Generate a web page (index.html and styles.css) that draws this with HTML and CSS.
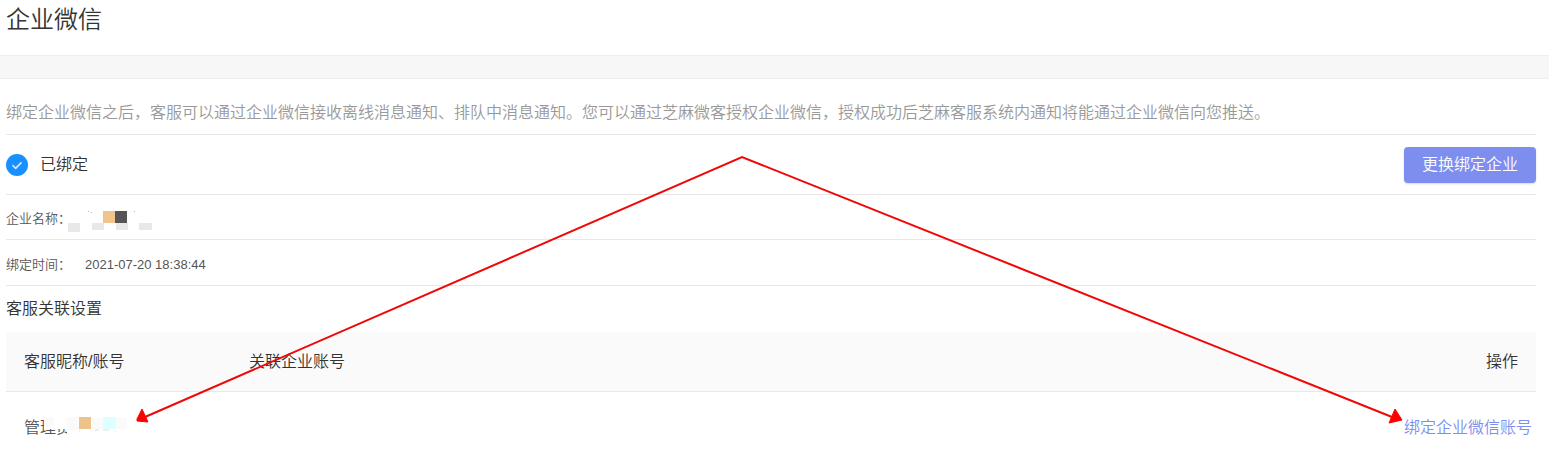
FILE: index.html
```html
<!DOCTYPE html>
<html lang="zh-CN">
<head>
    <meta charset="UTF-8">
    <meta name="viewport" content="width=device-width, initial-scale=1.0">
    <title>企业微信</title>
    <link rel="stylesheet" href="styles.css">
</head>
<body>
    <header class="header">
        <h1>企业微信</h1>
    </header>
    <div class="band"></div>
    <main class="content">
        <p class="intro">绑定企业微信之后，客服可以通过企业微信接收离线消息通知、排队中消息通知。您可以通过芝麻微客授权企业微信，授权成功后芝麻客服系统内通知将能通过企业微信向您推送。</p>
        <div class="status">
            <svg class="check" viewBox="0 0 22 22">
                <circle cx="11" cy="11" r="11" fill="#1890ff"/>
                <path d="M6.5 11.2l3.2 3.1 5.8-6" fill="none" stroke="#cfe8ff" stroke-width="1.7"/>
            </svg>
            <span>已绑定</span>
            <button type="button" class="btn">更换绑定企业</button>
        </div>
        <div class="info">
            <span class="label">企业名称：</span>
            <svg class="mosaic" viewBox="0 0 86 24">
                <path d="M2 14h12v9H2zM26 14h12v7H26zM50 14h12v7H50zM73 14h13v7H73z" fill="#e8e8e8"/>
                <path d="M37 2h12v12H37z" fill="#f0c48c"/>
                <path d="M49 2h12v12H49z" fill="#555"/>
                <path d="M22 2h1v1h-1zM25 3h1v1h-1zM68 2h1v1h-1z" fill="#bbb"/>
            </svg>
        </div>
        <div class="info info-time">
            <span class="label">绑定时间：</span>
            <span class="time">2021-07-20 18:38:44</span>
        </div>
        <h2>客服关联设置</h2>
        <table>
            <thead>
                <tr>
                    <th class="col-name">客服昵称/账号</th>
                    <th>关联企业账号</th>
                    <th class="col-action">操作</th>
                </tr>
            </thead>
            <tbody>
                <tr>
                    <td>
                        <div class="user">管理员
                            <svg class="user-mosaic" viewBox="0 0 106 20">
                                <path d="M20 0h24v12H20zM43 0h12v20H43z" fill="#fff"/>
                                <path d="M20 0h10v9H20zM43 0h11v13H43zM68 1h11v11H68zM92 1h11v11H92z" fill="#fafafa"/>
                                <path d="M55 0h12v12H55z" fill="#edc38c"/>
                                <path d="M79 0h13v12H79z" fill="#dff"/>
                                <path d="M55 14h1M67 14h1M71 13h4M79 13h6M91 14h1" stroke="#ddd"/>
                            </svg>
                        </div>
                    </td>
                    <td></td>
                    <td class="col-link"><a href="#">绑定企业微信账号</a></td>
                </tr>
            </tbody>
        </table>
    </main>
    <svg class="arrows" viewBox="0 0 1549 462">
        <path d="M145 417L742 157L1392 417" fill="none" stroke="#f00808" stroke-width="2"/>
        <path d="M137 419L142 409L148 422L137 421zM1402 420L1395 409L1389 423z" fill="#f00" stroke="#f00"/>
    </svg>
</body>
</html>
```
FILE: styles.css
```css
*{
    margin: 0;
    padding: 0;
    box-sizing: border-box;
}
body{
    position: relative;
    font-family: "Liberation Sans", "Noto Sans CJK SC", sans-serif;
    font-size: 16px;
    font-weight: 350;
    line-height: 24px;
    color: #333;
    background-color: #fff;
}
h1, h2, th{
    font-weight: 350;
}
.header{
    padding: 4px 6px 19px;
}
h1{
    font-size: 24px;
    line-height: 32px;
}
.band{
    height: 24px;
    background-color: #f7f7f7;
    border-top: 1px solid #eee;
    border-bottom: 1px solid #eee;
}
.content{
    padding: 0 13px 0 6px;
}
.intro{
    padding: 22px 0 9px;
    color: #999;
    border-bottom: 1px solid #e8e8e8;
}
.status{
    display: flex;
    align-items: center;
    gap: 12px;
    height: 60px;
    padding-top: 1px;
    border-bottom: 1px solid #e8e8e8;
}
.check{
    width: 22px;
    height: 22px;
}
.btn{
    height: 36px;
    margin-left: auto;
    padding: 0 18px;
    border: none;
    border-radius: 4px;
    background-color: #7e8eef;
    box-shadow: 0 1px 2px rgba(0, 0, 0, 0.15);
    color: #fff;
    font: inherit;
    cursor: pointer;
}
.info{
    display: flex;
    align-items: center;
    height: 45px;
    padding-top: 4px;
    font-size: 13px;
    color: #555;
    border-bottom: 1px solid #e8e8e8;
}
.info-time{
    height: 46px;
}
.label{
    width: 60px;
    white-space: nowrap;
}
.mosaic{
    width: 86px;
    height: 24px;
    margin-top: 4px;
}
.time{
    margin-left: 19px;
}
h2{
    padding: 11px 0;
    font-size: 16px;
    line-height: 24px;
}
table{
    width: 100%;
    border-spacing: 0;
}
th{
    height: 60px;
    padding: 0 18px;
    text-align: left;
    background-color: #fafafa;
    border-bottom: 1px solid #e8e8e8;
}
th:first-child{
    border-top-left-radius: 4px;
}
th:last-child{
    border-top-right-radius: 4px;
}
.col-name{
    width: 225px;
}
.col-action{
    text-align: right;
}
td{
    height: 70px;
    padding: 1px 18px 0;
    color: #555;
}
.col-link{
    padding-right: 4px;
    text-align: right;
}
a{
    color: #7e8eef;
    text-decoration: none;
}
.user{
    position: relative;
}
.user-mosaic{
    position: absolute;
    left: 0;
    top: 1px;
    width: 106px;
    height: 20px;
}
.arrows{
    position: absolute;
    top: 0;
    left: 0;
    width: 100%;
    pointer-events: none;
}
```
